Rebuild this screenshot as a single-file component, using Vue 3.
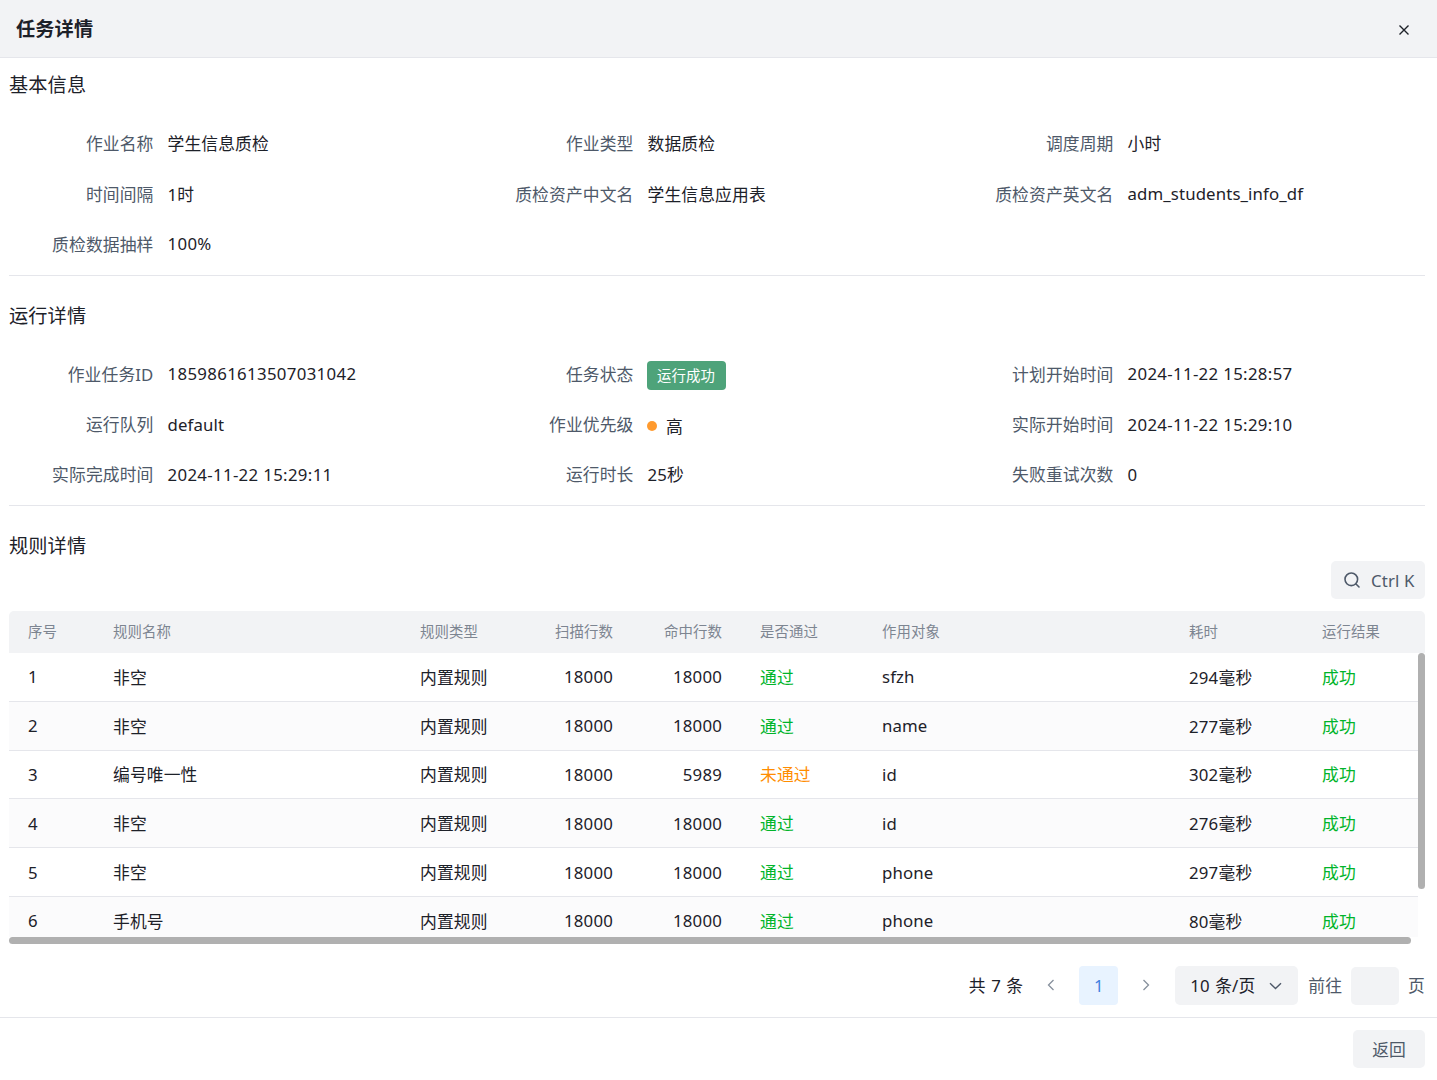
<script setup>
const basic = [
  ['作业名称', '学生信息质检'], ['作业类型', '数据质检'], ['调度周期', '小时'],
  ['时间间隔', '1时'], ['质检资产中文名', '学生信息应用表'], ['质检资产英文名', 'adm_students_info_df'],
  ['质检数据抽样', '100%'],
]
const run = [
  ['作业任务ID', '1859861613507031042'], ['任务状态', '', 'tag'], ['计划开始时间', '2024-11-22 15:28:57'],
  ['运行队列', 'default'], ['作业优先级', '', 'pri'], ['实际开始时间', '2024-11-22 15:29:10'],
  ['实际完成时间', '2024-11-22 15:29:11'], ['运行时长', '25秒'], ['失败重试次数', '0'],
]
const isNum = (v) => /^[\d\s:%-]+$/.test(v)
const cols = [85, 307, 122, 109, 109, 122, 307, 133, 122]
const heads = ['序号', '规则名称', '规则类型', '扫描行数', '命中行数', '是否通过', '作用对象', '耗时', '运行结果']
const rows = [
  [1, '非空', 18000, 18000, '通过', 'sfzh', '294毫秒'],
  [2, '非空', 18000, 18000, '通过', 'name', '277毫秒'],
  [3, '编号唯一性', 18000, 5989, '未通过', 'id', '302毫秒'],
  [4, '非空', 18000, 18000, '通过', 'id', '276毫秒'],
  [5, '非空', 18000, 18000, '通过', 'phone', '297毫秒'],
  [6, '手机号', 18000, 18000, '通过', 'phone', '80毫秒'],
]
</script>

<template>
  <div class="page">
    <header class="top">
      <h1>任务详情</h1>
      <svg class="close" width="12" height="12" viewBox="0 0 12 12"><path d="M1.5 1.5l9 9M10.5 1.5l-9 9" stroke="#1d2129" stroke-width="1.4" fill="none"/></svg>
    </header>

    <main class="body">
      <section class="sec">
        <h2>基本信息</h2>
        <div class="desc">
          <div v-for="d in basic" :key="d[0]" class="item">
            <span class="label">{{ d[0] }}</span><span class="val" :class="{ num: isNum(d[1]) }">{{ d[1] }}</span>
          </div>
        </div>
      </section>

      <section class="sec">
        <h2>运行详情</h2>
        <div class="desc">
          <div v-for="d in run" :key="d[0]" class="item">
            <span class="label">{{ d[0] }}</span>
            <span v-if="d[2] === 'tag'" class="tag">运行成功</span>
            <span v-else-if="d[2] === 'pri'" class="val pri"><i class="dot"></i>高</span>
            <span v-else class="val" :class="{ num: isNum(d[1]) }">{{ d[1] }}</span>
          </div>
        </div>
      </section>

      <section class="rules">
        <h2>规则详情</h2>
        <div class="tools">
          <div class="search">
            <svg width="18" height="18" viewBox="0 0 18 18" fill="none" stroke="#4e5969" stroke-width="1.6"><circle cx="8.3" cy="8.3" r="6.3"/><path d="M13 13l3 3" stroke-linecap="round"/></svg>
            <span>Ctrl K</span>
          </div>
        </div>

        <div class="tablewrap">
          <table class="thead">
            <colgroup><col v-for="(c, i) in cols" :key="i" :style="{ width: c + 'px' }"></colgroup>
            <tr>
              <th v-for="(h, i) in heads" :key="h" :class="{ r: i === 3 || i === 4 }">{{ h }}</th>
            </tr>
          </table>
          <div class="tbody">
            <table>
              <colgroup><col v-for="(c, i) in cols" :key="i" :style="{ width: c + 'px' }"></colgroup>
              <tr v-for="r in rows" :key="r[0]">
                <td>{{ r[0] }}</td>
                <td>{{ r[1] }}</td>
                <td>内置规则</td>
                <td class="r num">{{ r[2] }}</td>
                <td class="r num">{{ r[3] }}</td>
                <td :class="r[4] === '通过' ? 'ok' : 'warn'">{{ r[4] }}</td>
                <td>{{ r[5] }}</td>
                <td class="num">{{ r[6] }}</td>
                <td class="ok">成功</td>
              </tr>
            </table>
          </div>
          <div class="sb-v"></div>
          <div class="sb-h"></div>
        </div>

        <div class="pager">
          <span class="total">共 7 条</span>
          <svg class="arrow" width="10" height="14" viewBox="0 0 10 14" fill="none" stroke="#86909c" stroke-width="1.3"><path d="M7.5 2L2.5 7l5 5"/></svg>
          <span class="cur">1</span>
          <svg class="arrow" width="10" height="14" viewBox="0 0 10 14" fill="none" stroke="#86909c" stroke-width="1.3"><path d="M2.5 2l5 5-5 5"/></svg>
          <div class="size">
            <span class="lift">10 条/页</span>
            <svg width="13" height="8" viewBox="0 0 13 8" fill="none" stroke="#4e5969" stroke-width="1.4"><path d="M1 1.2l5.5 5.3L12 1.2"/></svg>
          </div>
          <span class="goto">前往</span>
          <span class="jump"></span>
          <span class="goto">页</span>
        </div>
      </section>
    </main>

    <footer class="foot">
      <button class="back" type="button">返回</button>
    </footer>
  </div>
</template>

<style>
html, body { margin: 0; background: #fff; }
</style>

<style scoped>
* { box-sizing: border-box; }
.page {
  width: 1437px;
  height: 1080px;
  overflow: hidden;
  display: flex;
  flex-direction: column;
  font-family: "Noto Sans", "Noto Sans CJK SC", sans-serif;
  font-size: 16.8px;
  letter-spacing: 0.12px;
  color: #1d2129;
}
.top {
  height: 58px;
  flex: none;
  background: #f2f3f5;
  border-bottom: 1px solid #e5e6eb;
  display: flex;
  align-items: center;
  justify-content: space-between;
  padding: 0 27px 0 16px;
}
h1 { margin: 0; font-size: 19.2px; font-weight: 700; line-height: 28px; }
.close { display: block; margin-top: 2px; }
.body { flex: 1; padding: 0 12px 0 9px; }
h2 { margin: 0; font-size: 19.2px; font-weight: 400; line-height: 28px; height: 28px; }
.sec { height: 230px; padding-top: 13px; position: relative; }
.sec + .sec { padding-top: 14px; }
.sec::after {
  content: "";
  position: absolute;
  left: 0;
  right: 0;
  top: 217px;
  border-top: 1px solid #e5e6eb;
}
.desc {
  display: grid;
  grid-template-columns: 480px 480px 1fr;
  grid-auto-rows: 50.4px;
  margin-top: 19px;
}
.sec + .sec .desc { margin-top: 18.5px; }
.item { display: flex; align-items: center; }
.label { width: 144.5px; text-align: right; color: #4e5969; margin-right: 14px; flex: none; }
.val { color: #1d2129; }
.num { letter-spacing: 0.34px; }
.pri { display: flex; align-items: center; margin-top: 3px; margin-left: -0.5px; }
.dot { width: 10px; height: 10px; border-radius: 50%; background: #ff9a2e; margin-right: 9px; margin-top: 0; }
.tag {
  height: 29px;
  line-height: 29px;
  padding: 0 11px 0 10px;
  margin-left: -0.5px;
  background: #4ea37a;
  border-radius: 4px;
  color: #fff;
  font-size: 14.4px;
  margin-top: 4px;
}
.rules { padding-top: 14px; }
.tools { display: flex; justify-content: flex-end; }
.search {
  width: 94px;
  height: 38px;
  background: #f2f3f5;
  border-radius: 5px;
  display: flex;
  align-items: center;
  gap: 10px;
  padding-left: 12px;
  color: #4e5969;
  margin-top: 1px;
  font-size: 16.8px;
}
.tablewrap { position: relative; margin-top: 12px; height: 334px; }
table { border-collapse: separate; border-spacing: 0; table-layout: fixed; width: 1416px; }
.thead { background: #f2f3f5; border-radius: 5px 5px 0 0; overflow: hidden; display: block; height: 42px; }
th {
  height: 42px;
  padding: 0 19px 3px;
  text-align: left;
  font-size: 14.4px;
  font-weight: 400;
  color: #7d8591;
}
.tbody { width: 1409px; height: 284px; overflow: hidden; }
tr:nth-of-type(even) td { background: #fbfbfc; }
td {
  height: 48.8px;
  padding: 0 19px;
  border-bottom: 1px solid #e5e6eb;
  white-space: nowrap;
}
.r { text-align: right; }
td.num { letter-spacing: 0.2px; }
.ok { color: #00b42a; }
.warn { color: #ff8d00; }
.sb-v { position: absolute; left: 1409px; top: 42px; width: 7px; height: 236px; background: #b0b0b0; border-radius: 4px; }
.sb-h { position: absolute; left: 0; top: 326px; width: 1402px; height: 7px; background: #b0b0b0; border-radius: 4px; }
.pager { display: flex; align-items: center; justify-content: flex-end; height: 39px; margin-top: 21px; }
.total { margin-right: 23px; word-spacing: 1px; padding-bottom: 2px; }
.arrow { display: block; margin-top: -2px; }
.cur {
  width: 39px;
  height: 39px;
  line-height: 39px;
  text-align: center;
  background: #e8f3ff;
  border-radius: 4px;
  color: #4080e0;
  margin: 0 23px;
}
.size {
  width: 123px;
  height: 39px;
  margin-left: 24px;
  margin-right: 1px;
  background: #f2f3f5;
  border-radius: 5px;
  display: flex;
  align-items: center;
  justify-content: space-between;
  padding: 0 16px 0 15px;
  word-spacing: 1px;
}
.lift { padding-bottom: 2px; }
.goto { color: #4e5969; margin-left: 9px; padding-bottom: 2px; }
.jump { width: 48px; height: 38px; background: #f2f3f5; border-radius: 5px; margin-left: 9px; }
.foot {
  flex: none;
  height: 63px;
  border-top: 1px solid #e5e6eb;
  padding: 12px 12px 0 0;
  display: flex;
  justify-content: flex-end;
  align-items: flex-start;
}
.back {
  width: 72px;
  height: 38px;
  border: 0;
  border-radius: 5px;
  background: #f2f3f5;
  font: inherit;
  color: #4e5969;
}
</style>
